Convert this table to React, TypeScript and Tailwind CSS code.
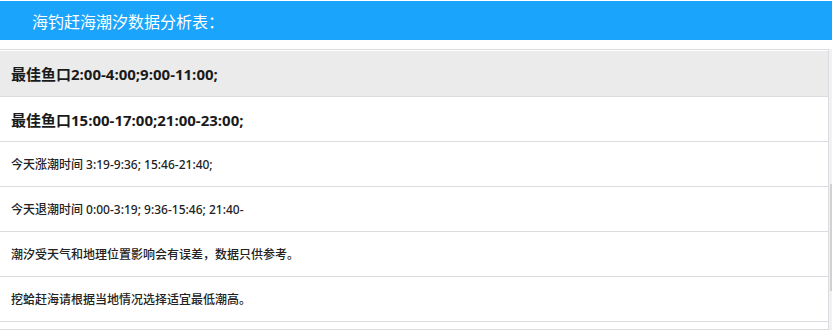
export default function App() {
    const rows = [
        { text: "今天涨潮时间 3:19-9:36; 15:46-21:40;" },
        { text: "今天退潮时间 0:00-3:19; 9:36-15:46; 21:40-" },
        { text: "潮汐受天气和地理位置影响会有误差，数据只供参考。" },
        { text: "挖蛤赶海请根据当地情况选择适宜最低潮高。" },
    ]

    return (
        <div
            className="w-[832px] h-[331px] overflow-hidden bg-white text-[#222]"
            style={{ fontFamily: '"Open Sans", "Noto Sans CJK SC", sans-serif' }}
        >
            <div className="mt-[1px] h-[39px] bg-[#1ba4fc] text-white text-[16px] pl-[32px] pt-[2px] flex items-center">
                海钓赶海潮汐数据分析表：
            </div>

            <div className="flex mt-[9px]">
                <div className="w-[829px] border-t border-r border-[#dcdce0] pt-[1px]">
                    <div className="h-[46px] bg-[#ebebeb] border-b border-[#dcdce0] pl-[11px] pt-[2px] flex items-center text-[15px] font-bold text-[#1a1a1a]">
                        最佳鱼口2:00-4:00;9:00-11:00;
                    </div>
                    <div className="h-[45px] border-b border-[#dcdce0] pl-[11px] pt-[2px] flex items-center text-[15px] font-bold text-[#1a1a1a]">
                        最佳鱼口15:00-17:00;21:00-23:00;
                    </div>
                    {rows.map((r) => (
                        <div
                            key={r.text}
                            className="h-[45px] border-b border-[#dcdce0] pl-[11px] pt-[2px] flex items-center text-[12px] font-medium font-['Noto_Sans','Noto_Sans_CJK_SC',sans-serif]"
                        >
                            {r.text}
                        </div>
                    ))}
                    <div className="h-[8px] border-b border-[#dcdce0]" />
                </div>
                <div className="w-[3px] bg-[#f1f1f3] flex flex-col">
                    <div className="h-[135px]" />
                    <div className="h-[107px] mx-auto w-[2px] bg-[#d0d0d0]" />
                </div>
            </div>
        </div>
    )
}
